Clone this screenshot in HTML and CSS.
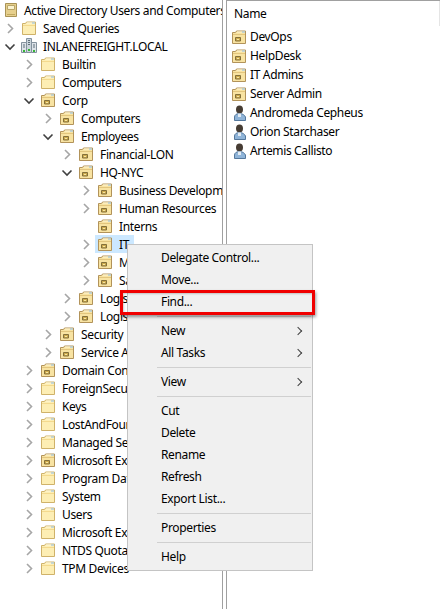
FILE: index.html
```html
<!DOCTYPE html>
<html lang="en">
<head>
    <meta charset="UTF-8">
    <title>Active Directory Users and Computers</title>
    <link rel="stylesheet" href="styles.css">
</head>
<body>
    <!-- icons used by the tree and the list -->
    <svg class="icon-defs" width="0" height="0">
        <symbol id="chev-right" viewBox="0 0 14 18"><path d="M5 5l4.500 4.500L5 14" fill="none" stroke="#a6a6a6" stroke-width="1.600"/></symbol>
        <symbol id="chev-down" viewBox="0 0 14 18"><path d="M2.500 7.500L7 12l4.500-4.500" fill="none" stroke="#404040" stroke-width="1.600"/></symbol>
        <symbol id="folder" viewBox="0 0 16 16">
            <path d="M1.500 14.500V3.500h3l1-1.500h9v12.500z" fill="#fdeeb4" stroke="#cfb26a"/>
            <path d="M2 5h12v1H2z" fill="#f3d98e"/>
            <path d="M6 2.500h8v1H6z" fill="#fff8dc"/>
            <path d="M11 2.500h3v1h-3z" fill="#8fbce0"/>
        </symbol>
        <symbol id="ou" viewBox="0 0 16 16">
            <path d="M1.500 14.500V3.500h3l1-1.500h9v12.500z" fill="#f8e3a2" stroke="#b2935a"/>
            <path d="M2 5h12v1H2z" fill="#e3c67e"/>
            <path d="M6 2.500h8v1H6z" fill="#fff6d8"/>
            <path d="M11 2.500h3v1h-3z" fill="#8fbce0"/>
            <path d="M4.500 8.500h5v3.500h-5z" fill="#cdaa4c" stroke="#84703a"/>
            <path d="M6 10h2v1H6z" fill="#f6e6a6"/>
        </symbol>
        <symbol id="root" viewBox="0 0 16 16">
            <path d="M3.500 1.500h11v13h-11z" fill="#e6cf8c" stroke="#a99356"/>
            <path d="M5.500 3.500h7v4h-7z" fill="#fbf3cf" stroke="#b9a66a"/>
            <path d="M5 12h8v1H5z" fill="#c2a95f"/>
        </symbol>
        <symbol id="domain" viewBox="0 0 16 16">
            <path d="M5.500 .5h5v14h-5z" fill="#c9d3da" stroke="#84929e"/>
            <path d="M.5 4.500h5v10h-5zM10.500 4.500h5v10h-5z" fill="#dde3e8" stroke="#84929e"/>
            <path d="M7 2.500h2M7 4.500h2M7 6.500h2M2 7h2M2 9h2M12 7h2M12 9h2" stroke="#5f6e7a"/>
            <path d="M2 12h2v2H2zM7 11h2v2H7zM12 12h2v2h-2z" fill="#36b536"/>
        </symbol>
        <symbol id="user" viewBox="0 0 16 16">
            <ellipse cx="8.500" cy="4.500" rx="3.500" ry="4" fill="#463c33"/>
            <path d="M3.500 15.500v-3.500c0-2 2-3.500 5-3.500s5 1.500 6 3.500v3.500z" fill="#8fb4d8" stroke="#55789c"/>
            <path d="M7 8.500h3V12H7z" fill="#e2ebf3"/>
        </symbol>
    </svg>

    <div class="console">
        <div class="tree">
            <div class="row root"><svg class="icon"><use href="#root"/></svg><span class="label">Active Directory Users and Computers</span></div>
            <div class="row l1"><svg class="chev"><use href="#chev-right"/></svg><svg class="icon"><use href="#folder"/></svg><span class="label">Saved Queries</span></div>
            <div class="row l1"><svg class="chev"><use href="#chev-down"/></svg><svg class="icon"><use href="#domain"/></svg><span class="label">INLANEFREIGHT.LOCAL</span></div>
            <div class="row l2"><svg class="chev"><use href="#chev-right"/></svg><svg class="icon"><use href="#folder"/></svg><span class="label">Builtin</span></div>
            <div class="row l2"><svg class="chev"><use href="#chev-right"/></svg><svg class="icon"><use href="#folder"/></svg><span class="label">Computers</span></div>
            <div class="row l2"><svg class="chev"><use href="#chev-down"/></svg><svg class="icon"><use href="#ou"/></svg><span class="label">Corp</span></div>
            <div class="row l3"><svg class="chev"><use href="#chev-right"/></svg><svg class="icon"><use href="#ou"/></svg><span class="label">Computers</span></div>
            <div class="row l3"><svg class="chev"><use href="#chev-down"/></svg><svg class="icon"><use href="#ou"/></svg><span class="label">Employees</span></div>
            <div class="row l4"><svg class="chev"><use href="#chev-right"/></svg><svg class="icon"><use href="#ou"/></svg><span class="label">Financial-LON</span></div>
            <div class="row l4"><svg class="chev"><use href="#chev-down"/></svg><svg class="icon"><use href="#ou"/></svg><span class="label">HQ-NYC</span></div>
            <div class="row l5"><svg class="chev"><use href="#chev-right"/></svg><svg class="icon"><use href="#ou"/></svg><span class="label">Business Development</span></div>
            <div class="row l5"><svg class="chev"><use href="#chev-right"/></svg><svg class="icon"><use href="#ou"/></svg><span class="label">Human Resources</span></div>
            <div class="row l5"><span class="chev"></span><svg class="icon"><use href="#ou"/></svg><span class="label">Interns</span></div>
            <div class="row l5"><svg class="chev"><use href="#chev-right"/></svg><span class="selected"><svg class="icon"><use href="#ou"/></svg><span class="label">IT</span></span></div>
            <div class="row l5"><svg class="chev"><use href="#chev-right"/></svg><svg class="icon"><use href="#ou"/></svg><span class="label">Marketing</span></div>
            <div class="row l5"><svg class="chev"><use href="#chev-right"/></svg><svg class="icon"><use href="#ou"/></svg><span class="label">Sales</span></div>
            <div class="row l4"><svg class="chev"><use href="#chev-right"/></svg><svg class="icon"><use href="#ou"/></svg><span class="label">Logistics-EU</span></div>
            <div class="row l4"><svg class="chev"><use href="#chev-right"/></svg><svg class="icon"><use href="#ou"/></svg><span class="label">Logistics-US</span></div>
            <div class="row l3"><svg class="chev"><use href="#chev-right"/></svg><svg class="icon"><use href="#ou"/></svg><span class="label">Security</span></div>
            <div class="row l3"><svg class="chev"><use href="#chev-right"/></svg><svg class="icon"><use href="#ou"/></svg><span class="label">Service Accounts</span></div>
            <div class="row l2"><svg class="chev"><use href="#chev-right"/></svg><svg class="icon"><use href="#ou"/></svg><span class="label">Domain Controllers</span></div>
            <div class="row l2"><svg class="chev"><use href="#chev-right"/></svg><svg class="icon"><use href="#folder"/></svg><span class="label">ForeignSecurityPrincipals</span></div>
            <div class="row l2"><svg class="chev"><use href="#chev-right"/></svg><svg class="icon"><use href="#folder"/></svg><span class="label">Keys</span></div>
            <div class="row l2"><svg class="chev"><use href="#chev-right"/></svg><svg class="icon"><use href="#folder"/></svg><span class="label">LostAndFound</span></div>
            <div class="row l2"><svg class="chev"><use href="#chev-right"/></svg><svg class="icon"><use href="#folder"/></svg><span class="label">Managed Service Accounts</span></div>
            <div class="row l2"><svg class="chev"><use href="#chev-right"/></svg><svg class="icon"><use href="#ou"/></svg><span class="label">Microsoft Exchange</span></div>
            <div class="row l2"><svg class="chev"><use href="#chev-right"/></svg><svg class="icon"><use href="#folder"/></svg><span class="label">Program Data</span></div>
            <div class="row l2"><svg class="chev"><use href="#chev-right"/></svg><svg class="icon"><use href="#folder"/></svg><span class="label">System</span></div>
            <div class="row l2"><svg class="chev"><use href="#chev-right"/></svg><svg class="icon"><use href="#folder"/></svg><span class="label">Users</span></div>
            <div class="row l2"><svg class="chev"><use href="#chev-right"/></svg><svg class="icon"><use href="#folder"/></svg><span class="label">Microsoft Exchange System</span></div>
            <div class="row l2"><svg class="chev"><use href="#chev-right"/></svg><svg class="icon"><use href="#folder"/></svg><span class="label">NTDS Quotas</span></div>
            <div class="row l2"><svg class="chev"><use href="#chev-right"/></svg><svg class="icon"><use href="#folder"/></svg><span class="label">TPM Devices</span></div>
        </div>

        <div class="list">
            <div class="list-head">Name</div>
            <div class="item"><svg class="icon"><use href="#ou"/></svg><span>DevOps</span></div>
            <div class="item"><svg class="icon"><use href="#ou"/></svg><span>HelpDesk</span></div>
            <div class="item"><svg class="icon"><use href="#ou"/></svg><span>IT Admins</span></div>
            <div class="item"><svg class="icon"><use href="#ou"/></svg><span>Server Admin</span></div>
            <div class="item"><svg class="icon"><use href="#user"/></svg><span>Andromeda Cepheus</span></div>
            <div class="item"><svg class="icon"><use href="#user"/></svg><span>Orion Starchaser</span></div>
            <div class="item"><svg class="icon"><use href="#user"/></svg><span>Artemis Callisto</span></div>
        </div>
    </div>

    <!-- context menu -->
    <div class="menu">
        <div class="menu-item">Delegate Control...</div>
        <div class="menu-item">Move...</div>
        <div class="menu-item">Find...</div>
        <div class="menu-sep"></div>
        <div class="menu-item has-sub">New<span class="arrow"></span></div>
        <div class="menu-item has-sub">All Tasks<span class="arrow"></span></div>
        <div class="menu-sep"></div>
        <div class="menu-item has-sub">View<span class="arrow"></span></div>
        <div class="menu-sep"></div>
        <div class="menu-item">Cut</div>
        <div class="menu-item">Delete</div>
        <div class="menu-item">Rename</div>
        <div class="menu-item">Refresh</div>
        <div class="menu-item">Export List...</div>
        <div class="menu-sep"></div>
        <div class="menu-item">Properties</div>
        <div class="menu-sep"></div>
        <div class="menu-item">Help</div>
    </div>
    <div class="highlight"></div>
</body>
</html>
```

FILE: styles.css
```css
html, body {
    height: 100%;
}
body {
    margin: 0;
    background: #ffffff;
    color: #000000;
    font-family: "Noto Sans", "Open Sans", sans-serif;
    font-size: 12px;
    letter-spacing: -0.35px;
    overflow: hidden;
}
.icon-defs {
    position: absolute;
}
.console {
    display: flex;
    height: 609px;
}
.tree {
    width: 222px;
    padding-top: 1px;
    border-right: 1px solid #a0a0a0;
    overflow: hidden;
}
.row {
    display: flex;
    align-items: center;
    height: 18px;
    white-space: nowrap;
}
.root { padding-left: 2px; }
.l1 { padding-left: 3px; }
.l2 { padding-left: 22px; }
.l3 { padding-left: 41px; }
.l4 { padding-left: 60px; }
.l5 { padding-left: 79px; }
.chev {
    flex: none;
    width: 14px;
    height: 18px;
    margin-right: 4px;
}
.icon {
    flex: none;
    width: 16px;
    height: 16px;
}
.label {
    margin-left: 6px;
}
.selected {
    display: flex;
    align-items: center;
    height: 18px;
    margin-left: -2px;
    padding: 0 5px 0 2px;
    background: #cce8ff;
}
.list {
    flex: 1;
    margin-left: 3px;
    border-left: 1px solid #a0a0a0;
    border-top: 1px solid #a0a0a0;
}
.list-head {
    height: 25px;
    padding-left: 7px;
    line-height: 26px;
    margin-bottom: 1px;
    border-right: 1px solid #e5e5e5;
}
.item {
    display: flex;
    align-items: center;
    gap: 3px;
    height: 19px;
    padding-left: 4px;
    white-space: nowrap;
}
.menu {
    position: absolute;
    left: 127px;
    top: 244px;
    width: 184px;
    padding: 2px 0;
    background: #f0f0f0;
    border: 1px solid #c4c4c4;
}
.menu-item {
    position: relative;
    height: 22px;
    line-height: 22px;
    padding-left: 33px;
}
.arrow {
    position: absolute;
    right: 11px;
    top: 8px;
    width: 5px;
    height: 5px;
    border-top: 1px solid #404040;
    border-right: 1px solid #404040;
    transform: rotate(45deg);
}
.menu-sep {
    height: 1px;
    margin: 3px 1px 3px 29px;
    background: #d0d0d0;
}
.highlight {
    position: absolute;
    left: 120px;
    top: 290px;
    width: 189px;
    height: 19px;
    border: 3px solid #f00000;
    box-shadow: 1px 2px 3px rgba(0, 0, 0, 0.4), inset 1px 1px 2px rgba(0, 0, 0, 0.2);
}
```
